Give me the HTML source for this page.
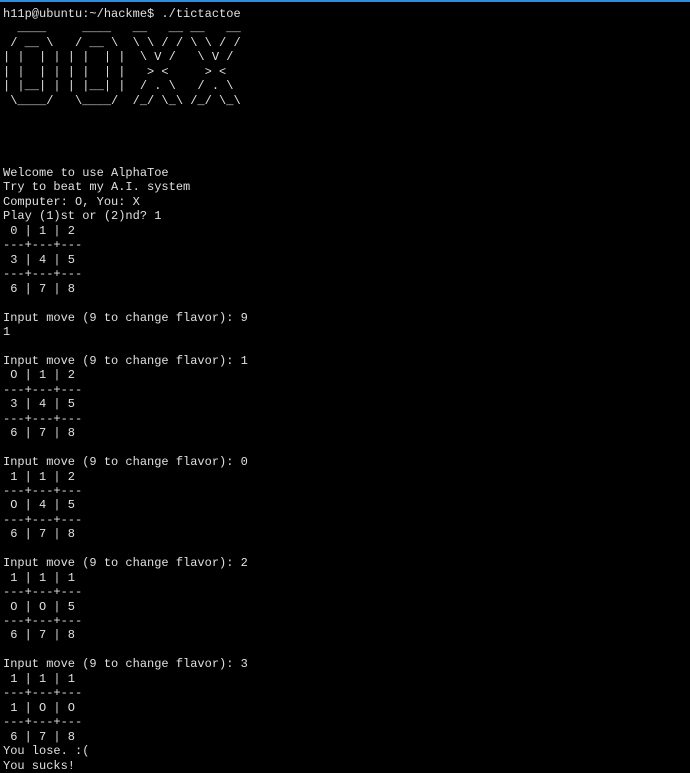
<!DOCTYPE html>
<html><head><meta charset="utf-8"><style>
html,body{margin:0;padding:0;background:#000;width:690px;height:773px;overflow:hidden}
.bar{position:absolute;left:0;top:0;width:690px;height:2px;background:#2f8be0}
pre{position:absolute;left:3px;top:7px;margin:0;font-family:"Liberation Mono",monospace;font-size:12px;line-height:14.45px;color:#e0e0e0}
</style></head><body><div class="bar"></div><pre>h11p@ubuntu:~/hackme$ ./tictactoe
  ____     ____   __   __ __   __
 / __ \   / __ \  \ \ / / \ \ / /
| |  | | | |  | |  \ V /   \ V /
| |  | | | |  | |   &gt; &lt;     &gt; &lt;
| |__| | | |__| |  / . \   / . \
 \____/   \____/  /_/ \_\ /_/ \_\




Welcome to use AlphaToe
Try to beat my A.I. system
Computer: O, You: X
Play (1)st or (2)nd? 1
 0 | 1 | 2
---+---+---
 3 | 4 | 5
---+---+---
 6 | 7 | 8

Input move (9 to change flavor): 9
1

Input move (9 to change flavor): 1
 O | 1 | 2
---+---+---
 3 | 4 | 5
---+---+---
 6 | 7 | 8

Input move (9 to change flavor): 0
 1 | 1 | 2
---+---+---
 O | 4 | 5
---+---+---
 6 | 7 | 8

Input move (9 to change flavor): 2
 1 | 1 | 1
---+---+---
 O | O | 5
---+---+---
 6 | 7 | 8

Input move (9 to change flavor): 3
 1 | 1 | 1
---+---+---
 1 | O | O
---+---+---
 6 | 7 | 8
You lose. :(
You sucks!</pre></body></html>
